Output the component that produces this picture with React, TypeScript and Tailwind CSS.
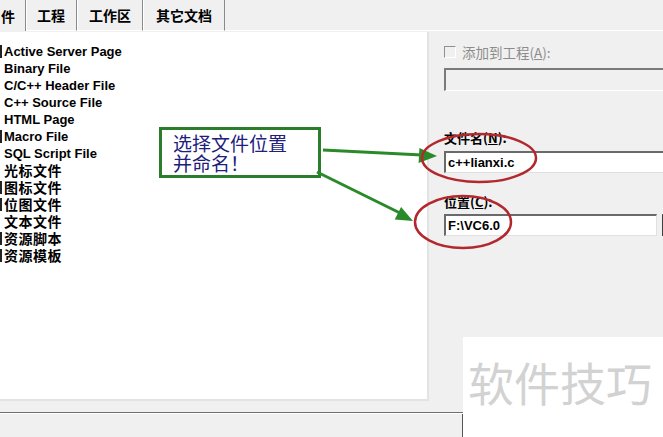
import React from "react";

const latin = { fontFamily: '"Liberation Sans", Arial, sans-serif' };
const cjk = { fontFamily: '"Noto Sans CJK SC", "Liberation Sans", sans-serif' };

const rows: { t: string; cjk?: boolean; bar?: boolean }[] = [
  { t: "Active Server Page", bar: true },
  { t: "Binary File" },
  { t: "C/C++ Header File" },
  { t: "C++ Source File" },
  { t: "HTML Page" },
  { t: "Macro File", bar: true },
  { t: "SQL Script File" },
  { t: "光标文件", cjk: true },
  { t: "图标文件", cjk: true, bar: true },
  { t: "位图文件", cjk: true, bar: true },
  { t: "文本文件", cjk: true },
  { t: "资源脚本", cjk: true, bar: true },
  { t: "资源模板", cjk: true, bar: true },
];

function Tab({ label, w, pl }: { label: string; w: string; pl: string }) {
  return (
    <div
      className={`${w} ${pl} shrink-0 h-full flex items-center border-l border-l-white border-r border-r-[#8a8a8a] border-b border-b-white text-[14px] font-bold text-black leading-[16px]`}
      style={cjk}
    >
      {label}
    </div>
  );
}

export default function App() {
  return (
    <div className="relative w-[663px] h-[437px] overflow-hidden bg-[#f0f0f0] select-none">
      {/* tab bar */}
      <div className="flex h-[32px] pb-[1px]">
        <div
          className="w-[26px] shrink-0 h-full flex items-center border-r border-r-[#8a8a8a] text-[14px] font-bold text-black leading-[16px] pl-[1px]"
          style={cjk}
        >
          件
        </div>
        <Tab label="工程" w="w-[51px]" pl="pl-[10px]" />
        <Tab label="工作区" w="w-[66px]" pl="pl-[11px]" />
        <Tab label="其它文档" w="w-[82px]" pl="pl-[12px]" />
        <div className="flex-1 h-full border-b border-b-white" />
      </div>

      {/* body */}
      <div className="flex h-[369px]">
        {/* list */}
        <div className="w-[429px] shrink-0 h-full bg-white border-r-2 border-r-[#e3e3e3] border-b-2 border-b-[#e3e3e3] pt-[11px]">
          {rows.map((r, i) => (
            <div key={i} className="h-[17px] flex items-center">
              <div className={`w-[2px] h-[13px] shrink-0 ${r.bar ? "bg-[#222]" : ""}`} />
              <span
                className={`ml-[2px] font-bold text-black ${r.cjk ? "text-[14px] leading-[15px] tracking-[0.5px]" : "text-[13px] leading-[15px]"}`}
                style={r.cjk ? cjk : latin}
              >
                {r.t}
              </span>
            </div>
          ))}
        </div>

        {/* right panel */}
        <div className="flex-1 min-w-0 pl-[15px] pt-[13px] flex flex-col">
          <div className="flex items-center h-[14px] gap-[6px]">
            <div className="w-[12px] h-[12px] shrink-0 border-t border-l border-t-[#909090] border-l-[#909090] border-b border-r border-b-white border-r-white bg-[#f0f0f0]" />
            <span className="text-[13.5px] text-[#8c8c8c] whitespace-nowrap leading-[14px]" style={cjk}>
              添加到工程(<span className="underline">A</span>):
            </span>
          </div>
          <div className="mt-[9px] w-[240px] shrink-0 h-[23px] border-t-2 border-l-2 border-t-[#7a7a7a] border-l-[#7a7a7a] border-b border-b-white bg-[#f0f0f0]" />

          <div className="mt-[39px] text-[13px] font-bold text-black leading-[16px] whitespace-nowrap" style={cjk}>
            文件名(<span className="underline">N</span>):
          </div>
          <div
            className="mt-[5px] w-[240px] shrink-0 h-[22px] border-t-2 border-l-2 border-t-[#6a6a6a] border-l-[#6a6a6a] border-b border-b-[#e0e0e0] bg-white flex items-center pl-[2px] text-[13px] font-bold text-black"
            style={latin}
          >
            c++lianxi.c
          </div>

          <div className="mt-[21px] text-[13px] font-bold text-black leading-[16px] whitespace-nowrap" style={cjk}>
            位置(<span className="underline">C</span>):
          </div>
          <div className="mt-[4px] flex gap-[5px] w-[260px]">
            <div
              className="w-[213px] shrink-0 h-[22px] border-t-2 border-l-2 border-t-[#6a6a6a] border-l-[#6a6a6a] border-b border-r border-b-[#e0e0e0] border-r-[#e0e0e0] bg-white flex items-center pl-[2px] text-[13px] font-bold text-black"
              style={latin}
            >
              F:\VC6.0
            </div>
            <div className="w-[20px] shrink-0 h-[22px] border-l-2 border-t border-l-[#404040] border-t-[#a0a0a0] bg-[#f0f0f0]" />
          </div>
        </div>
      </div>

      {/* bottom separator */}
      <div className="h-[11px]" />
      <div className="h-[2px] border-t border-t-[#6e6e6e] border-b border-b-white" />
      <div className="h-[23px] w-[463px] border-r border-r-[#555]" />

      {/* annotation box */}
      <div
        className="absolute left-[159px] top-[127px] w-[162px] h-[51px] border-[3px] border-[#2a7d2a] bg-white pl-[11px] pt-[3px] text-[19px] leading-[20px] text-[#20207a]"
        style={cjk}
      >
        选择文件位置
        <br />
        并命名！
      </div>

      {/* arrows & ellipses */}
      <svg className="absolute left-0 top-0 pointer-events-none" width="663" height="437" viewBox="0 0 663 437">
        <line x1="323" y1="150" x2="422" y2="155" stroke="#2a8a2a" strokeWidth="3" />
        <polygon points="437,156 418.6,163 419.4,148" fill="#2a8a2a" />
        <line x1="317" y1="172" x2="400" y2="213" stroke="#2a8a2a" strokeWidth="3" />
        <polygon points="413,221 394.7,219.5 401.1,207.1" fill="#2a8a2a" />
        <ellipse cx="479" cy="158" rx="57" ry="24" fill="none" stroke="#b3282d" strokeWidth="2.5" />
        <ellipse cx="463" cy="222" rx="48" ry="26" fill="none" stroke="#b3282d" strokeWidth="2.5" />
      </svg>

      {/* watermark */}
      <div
        className="absolute left-[463px] top-[337px] w-[200px] h-[100px] bg-white flex items-start pl-[5px] pt-[18px] text-[46px] leading-[52px] text-[#d2d2d2]"
        style={cjk}
      >
        软件技巧
      </div>
    </div>
  );
}
